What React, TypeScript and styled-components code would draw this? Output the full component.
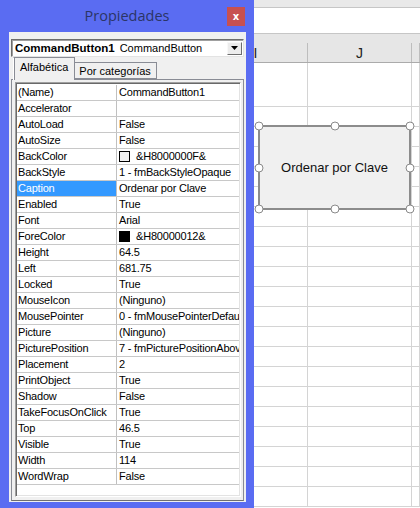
import React from "react";
import styled, { createGlobalStyle } from "styled-components";

const GlobalStyle = createGlobalStyle`
  html, body {
    margin: 0;
    padding: 0;
  }
  body {
    width: 420px;
    height: 508px;
    overflow: hidden;
    background: #ffffff;
    font-family: "Liberation Sans", Arial, sans-serif;
  }
`;

const Screen = styled.div`
  position: relative;
  width: 420px;
  height: 508px;
  overflow: hidden;
`;

/* ---------- worksheet behind the window ---------- */

const Sheet = styled.div`
  display: flex;
  flex-direction: column;
  height: 100%;
`;

const RibbonEdge = styled.div`
  height: 7px;
  background: #e9e9e9;
  border-bottom: 1px solid #c6c6c6;
`;

const FormulaBar = styled.div`
  height: 25px;
  background: #ffffff;
  border-bottom: 1px solid #c6c6c6;
`;

const HeaderStrip = styled.div`
  height: 9px;
  background: #e6e6e6;
`;

const SheetRow = styled.div<{ $height: number; $header?: boolean }>`
  display: grid;
  grid-template-columns: 204px 104px 104px 1fr;
  height: ${(p) => p.$height}px;
  box-sizing: border-box;
  background: ${(p) => (p.$header ? "#e6e6e6" : "#ffffff")};
  border-bottom: 1px solid ${(p) => (p.$header ? "#ababab" : "#d4d4d4")};
  flex-shrink: 0;
`;

const SheetCell = styled.div<{ $header?: boolean }>`
  border-right: 1px solid ${(p) => (p.$header ? "#bdbdbd" : "#d4d4d4")};
  display: flex;
  align-items: center;
  justify-content: center;
  font-family: "Liberation Sans", Arial, sans-serif;
  font-size: 14px;
  color: #222;
`;

/* ---------- selected command button on the sheet ---------- */

const ShapeFrame = styled.div`
  position: absolute;
  left: 258px;
  top: 125px;
  width: 153px;
  height: 85px;
  box-sizing: border-box;
  border: 2px solid #8c8c8c;
  background: #f0f0f0;
  display: flex;
  align-items: center;
  justify-content: center;
  font-family: "Liberation Sans", Arial, sans-serif;
  font-size: 13px;
  color: #111;
`;

const Handle = styled.span<{ $x: number; $y: number }>`
  position: absolute;
  left: calc(${(p) => p.$x}% + ${(p) => (p.$x === 0 ? -1 : p.$x === 100 ? 1 : 0)}px);
  top: calc(${(p) => p.$y}% + ${(p) => (p.$y === 0 ? -1 : p.$y === 100 ? 1 : 0)}px);
  width: 9px;
  height: 9px;
  box-sizing: border-box;
  border-radius: 50%;
  border: 1.5px solid #8a8a8a;
  background: #ffffff;
  transform: translate(-50%, -50%);
`;

/* ---------- properties window ---------- */

const Window = styled.div`
  position: absolute;
  left: 0;
  top: 0;
  width: 254px;
  height: 508px;
  background: #5a6cf2;
  display: flex;
  flex-direction: column;
`;

const TitleBar = styled.div`
  height: 32px;
  display: grid;
  grid-template-columns: 1fr auto 1fr;
  align-items: center;
`;

const Title = styled.div`
  grid-column: 2;
  font-family: "Open Sans", "Noto Sans", sans-serif;
  font-size: 14.5px;
  color: #2b3566;
  padding-bottom: 1px;
`;

const CloseButton = styled.div`
  grid-column: 3;
  justify-self: end;
  margin-right: 9px;
  margin-top: 1px;
  width: 18px;
  height: 19px;
  background: #c75050;
  color: #ffffff;
  font-family: "DejaVu Sans", sans-serif;
  font-size: 10px;
  font-weight: bold;
  display: flex;
  align-items: center;
  justify-content: center;
`;

const Client = styled.div`
  flex: 1;
  margin: 0 8px 6px 9px;
  background: #f0f0f0;
  padding: 7px 2px 1px 2px;
  display: flex;
  flex-direction: column;
`;

const Combo = styled.div`
  height: 18px;
  box-sizing: border-box;
  background: #ffffff;
  border: 1px solid;
  border-color: #6d6d6d #e3e3e3 #e3e3e3 #6d6d6d;
  box-shadow: inset 1px 1px 0 #a0a0a0;
  display: flex;
  align-items: center;
  padding-left: 3px;
  font-family: "Liberation Sans", Arial, sans-serif;
  font-size: 11px;
  color: #000;
`;

const ComboName = styled.b`
  font-size: 11.5px;
  margin-right: 5px;
`;

const ComboType = styled.span`
  flex: 1;
`;

const DropButton = styled.div`
  width: 15px;
  height: 13px;
  margin-right: 1px;
  box-sizing: border-box;
  border: 1px solid;
  border-color: #f8f8f8 #6d6d6d #6d6d6d #f8f8f8;
  background: #ececec;
  display: flex;
  align-items: center;
  justify-content: center;
`;

const Tabs = styled.div`
  height: 22px;
  display: flex;
  align-items: flex-end;
  padding-left: 2px;
  position: relative;
  z-index: 1;
`;

const Tab = styled.div<{ $active?: boolean }>`
  height: ${(p) => (p.$active ? 23 : 17)}px;
  box-sizing: border-box;
  margin-bottom: ${(p) => (p.$active ? -1 : 0)}px;
  padding: ${(p) => (p.$active ? "3px 6px 0 6px" : "2px 5px 0 4px")};
  background: #f0f0f0;
  border: 1px solid #898c95;
  border-bottom: ${(p) => (p.$active ? "none" : "1px solid #898c95")};
  border-left: ${(p) => (p.$active ? "1px solid #ffffff" : "none")};
  box-shadow: ${(p) => (p.$active ? "inset 1px 0 0 #898c95" : "none")};
  font-family: "Liberation Sans", Arial, sans-serif;
  font-size: 11px;
  color: #000;
  white-space: nowrap;
`;

const TabPage = styled.div`
  flex: 1;
  min-height: 0;
  border: 1px solid #898c95;
  border-bottom-color: #6f6f6f;
  padding: 2px 2px 3px 3px;
  display: flex;
`;

const Grid = styled.div`
  flex: 1;
  min-width: 0;
  box-sizing: border-box;
  border: 1px solid;
  border-color: #a0a0a0 #ffffff #ffffff #a0a0a0;
  box-shadow: inset 1px 1px 0 #696969, inset -1px -1px 0 #e3e3e3;
  background: #ffffff;
  padding: 2px 1px 0 1px;
  overflow: hidden;
`;

const PropRow = styled.div`
  display: grid;
  grid-template-columns: 100px 1fr;
  height: 16px;
  box-sizing: border-box;
  border-bottom: 1px solid #c8c8c8;
`;

const NameCell = styled.div<{ $selected?: boolean }>`
  border-right: 1px solid #c0c0c0;
  background: ${(p) => (p.$selected ? "#3399ff" : "transparent")};
  color: ${(p) => (p.$selected ? "#ffffff" : "#000000")};
  padding-left: 1px;
  font-size: 11px;
  letter-spacing: -0.2px;
  line-height: 15px;
  white-space: nowrap;
  overflow: hidden;
`;

const ValueCell = styled.div`
  display: flex;
  align-items: center;
  padding-left: 2px;
  font-size: 11px;
  letter-spacing: -0.2px;
  line-height: 15px;
  white-space: nowrap;
  overflow: hidden;
  color: #000;
`;

const Swatch = styled.span<{ $color: string }>`
  width: 11px;
  height: 11px;
  box-sizing: border-box;
  border: 1px solid #000;
  background: ${(p) => p.$color};
  margin-right: 6px;
  flex-shrink: 0;
`;

type Prop = { name: string; value: string; swatch?: string; selected?: boolean };

const props: Prop[] = [
  { name: "(Name)", value: "CommandButton1" },
  { name: "Accelerator", value: "" },
  { name: "AutoLoad", value: "False" },
  { name: "AutoSize", value: "False" },
  { name: "BackColor", value: "&H8000000F&", swatch: "#f0f0f0" },
  { name: "BackStyle", value: "1 - fmBackStyleOpaque" },
  { name: "Caption", value: "Ordenar por Clave", selected: true },
  { name: "Enabled", value: "True" },
  { name: "Font", value: "Arial" },
  { name: "ForeColor", value: "&H80000012&", swatch: "#000000" },
  { name: "Height", value: "64.5" },
  { name: "Left", value: "681.75" },
  { name: "Locked", value: "True" },
  { name: "MouseIcon", value: "(Ninguno)" },
  { name: "MousePointer", value: "0 - fmMousePointerDefault" },
  { name: "Picture", value: "(Ninguno)" },
  { name: "PicturePosition", value: "7 - fmPicturePositionAboveCenter" },
  { name: "Placement", value: "2" },
  { name: "PrintObject", value: "True" },
  { name: "Shadow", value: "False" },
  { name: "TakeFocusOnClick", value: "True" },
  { name: "Top", value: "46.5" },
  { name: "Visible", value: "True" },
  { name: "Width", value: "114" },
  { name: "WordWrap", value: "False" },
];

const handles = [
  [0, 0],
  [50, 0],
  [100, 0],
  [0, 50],
  [100, 50],
  [0, 100],
  [50, 100],
  [100, 100],
];

const App: React.FC = () => {
  const bodyRows = Array.from({ length: 20 });

  return (
    <>
      <GlobalStyle />
      <Screen>
        <Sheet>
          <RibbonEdge />
          <FormulaBar />
          <HeaderStrip />
          <SheetRow $height={20} $header>
            <SheetCell $header />
            <SheetCell $header>I</SheetCell>
            <SheetCell $header>J</SheetCell>
            <SheetCell $header />
          </SheetRow>
          <SheetRow $height={44}>
            <SheetCell />
            <SheetCell />
            <SheetCell />
            <SheetCell />
          </SheetRow>
          {bodyRows.map((_, i) => (
            <SheetRow key={i} $height={20}>
              <SheetCell />
              <SheetCell />
              <SheetCell />
              <SheetCell />
            </SheetRow>
          ))}
        </Sheet>

        <ShapeFrame>
          Ordenar por Clave
          {handles.map(([x, y]) => (
            <Handle key={`${x}-${y}`} $x={x} $y={y} />
          ))}
        </ShapeFrame>

        <Window>
          <TitleBar>
            <Title>Propiedades</Title>
            <CloseButton>x</CloseButton>
          </TitleBar>
          <Client>
            <Combo>
              <ComboName>CommandButton1</ComboName>
              <ComboType>CommandButton</ComboType>
              <DropButton>
                <svg width="7" height="4" viewBox="0 0 7 4">
                  <path d="M0 0 H7 L3.5 4 Z" fill="#000" />
                </svg>
              </DropButton>
            </Combo>
            <Tabs>
              <Tab $active>Alfabética</Tab>
              <Tab>Por categorías</Tab>
            </Tabs>
            <TabPage>
              <Grid>
                {props.map((p) => (
                  <PropRow key={p.name}>
                    <NameCell $selected={p.selected}>{p.name}</NameCell>
                    <ValueCell>
                      {p.swatch && <Swatch $color={p.swatch} />}
                      {p.value}
                    </ValueCell>
                  </PropRow>
                ))}
              </Grid>
            </TabPage>
          </Client>
        </Window>
      </Screen>
    </>
  );
};

export default App;
